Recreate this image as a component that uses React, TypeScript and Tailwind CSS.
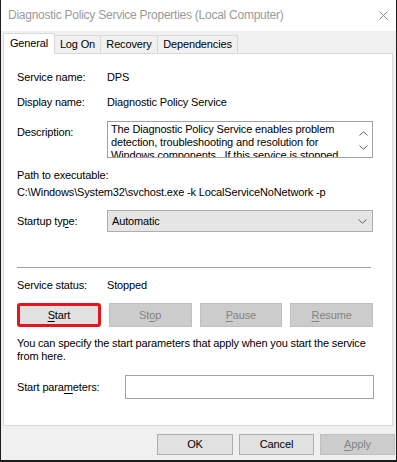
import React from 'react';

function Btn({
  children,
  disabled,
  className = '',
}: {
  children: React.ReactNode;
  disabled?: boolean;
  className?: string;
}) {
  return (
    <div
      className={
        'flex items-center justify-center border ' +
        (disabled
          ? 'bg-[#cccccc] border-[#bfbfbf] text-[#838383] '
          : 'bg-[#e1e1e1] border-[#adadad] text-black ') +
        className
      }
    >
      {children}
    </div>
  );
}

function U({ children }: { children: React.ReactNode }) {
  return <span className="underline underline-offset-[2px] decoration-1">{children}</span>;
}

const Chevron = ({ up, className = '' }: { up?: boolean; className?: string }) => (
  <svg width="9" height="5" viewBox="0 0 9 5" className={className}>
    <path
      d={up ? 'M0.5 4.5 L4.5 0.8 L8.5 4.5' : 'M0.5 0.5 L4.5 4.2 L8.5 0.5'}
      fill="none"
      stroke="#606060"
      strokeWidth="1"
    />
  </svg>
);

export default function App() {
  return (
    <div className="w-[397px] h-[462px] flex flex-col bg-[#f0f0f0] border-l border-r border-b-2 border-[#1c1c1c] font-['Liberation_Sans',Arial,sans-serif] text-[11px] leading-[15px] tracking-[-0.15px] text-black overflow-hidden">
      {/* title bar */}
      <div className="h-[31px] shrink-0 bg-white flex items-center justify-between pl-[7px] pr-[4px]">
        <span className="text-[12px] text-[#9a9a9a] tracking-[-0.25px]">
          Diagnostic Policy Service Properties (Local Computer)
        </span>
        <svg width="9" height="9" viewBox="0 0 9 9" className="mr-[4px] mb-[1px]">
          <path d="M0.5 0.5 L8.5 8.5 M8.5 0.5 L0.5 8.5" stroke="#8a8a8a" strokeWidth="1" />
        </svg>
      </div>

      {/* tabs */}
      <div className="h-[22px] shrink-0 flex items-end pl-[2px]">
        <div className="relative z-10 -mb-px w-[52px] h-[21px] bg-white border border-b-0 border-[#d9d9d9] flex items-center justify-center pb-[2px]">
          General
        </div>
        <div className="-ml-px w-[47px] h-[18px] border border-b-0 border-[#d9d9d9] flex items-center justify-center">
          Log On
        </div>
        <div className="-ml-px w-[58px] h-[18px] border border-b-0 border-[#d9d9d9] flex items-center justify-center">
          Recovery
        </div>
        <div className="-ml-px w-[81px] h-[18px] border border-b-0 border-[#d9d9d9] flex items-center justify-center">
          Dependencies
        </div>
      </div>

      {/* panel */}
      <div className="ml-[2px] w-[390px] h-[373px] shrink-0 bg-white border border-[#d9d9d9] pl-[13px] pt-[16px] flex flex-col">
        <div className="flex">
          <span className="w-[90px]">Service name:</span>
          <span>DPS</span>
        </div>
        <div className="flex mt-[10px]">
          <span className="w-[90px]">Display name:</span>
          <span>Diagnostic Policy Service</span>
        </div>
        <div className="flex mt-[11px]">
          <span className="w-[90px] pt-[4px]">Description:</span>
          <div className="w-[266px] h-[37px] border border-[#a0a0a0] flex overflow-hidden">
            <div className="flex-1 pl-[3px] pt-[1px] leading-[13px] overflow-hidden">
              The Diagnostic Policy Service enables problem detection, troubleshooting and resolution for
              Windows components.&nbsp; If this service is stopped, diagnostics will no longer function.
            </div>
            <div className="w-[17px] flex flex-col items-center pt-[9px] gap-[9px]">
              <Chevron up />
              <Chevron />
            </div>
          </div>
        </div>
        <div className="mt-[10px]">Path to executable:</div>
        <div className="mt-[2px]">C:\Windows\System32\svchost.exe -k LocalServiceNoNetwork -p</div>
        <div className="flex items-center mt-[10px]">
          <span className="w-[90px]">
            Startup ty<U>p</U>e:
          </span>
          <div className="w-[266px] h-[22px] bg-[#e5e5e5] border border-[#adadad] flex items-center justify-between pl-[4px] pr-[5px]">
            <span>Automatic</span>
            <Chevron />
          </div>
        </div>

        <div className="mt-[35px] w-[354px] h-px bg-[#a0a0a0]" />

        <div className="flex mt-[10px]">
          <span className="w-[90px]">Service status:</span>
          <span>Stopped</span>
        </div>
        <div className="flex gap-[8px] mt-[10px] w-[356px]">
          <div className="w-[84px] h-[24px] rounded-[3px] border-[3px] border-[#e8131b] bg-[#e1e1e1] flex items-center justify-center">
            <span>
              <U>S</U>tart
            </span>
          </div>
          <Btn disabled className="w-[83px] h-[24px]">
            <span>
              St<U>o</U>p
            </span>
          </Btn>
          <Btn disabled className="w-[83px] h-[24px]">
            <span>
              <U>P</U>ause
            </span>
          </Btn>
          <Btn disabled className="w-[83px] h-[24px]">
            <span>
              <U>R</U>esume
            </span>
          </Btn>
        </div>

        <div className="mt-[10px] leading-[13px] w-[360px]">
          You can specify the start parameters that apply when you start the service from here.
        </div>

        <div className="flex items-center mt-[12px]">
          <span className="w-[108px]">
            Start para<U>m</U>eters:
          </span>
          <div className="w-[249px] h-[24px] bg-white border border-[#a0a0a0]" />
        </div>
      </div>

      {/* bottom buttons */}
      <div className="flex justify-end gap-[6px] pr-[1px] mt-[8px]">
        <Btn className="w-[76px] h-[21px]">OK</Btn>
        <Btn className="w-[75px] h-[21px]">Cancel</Btn>
        <Btn disabled className="w-[75px] h-[21px]">
          <span>
            <U>A</U>pply
          </span>
        </Btn>
      </div>
    </div>
  );
}
